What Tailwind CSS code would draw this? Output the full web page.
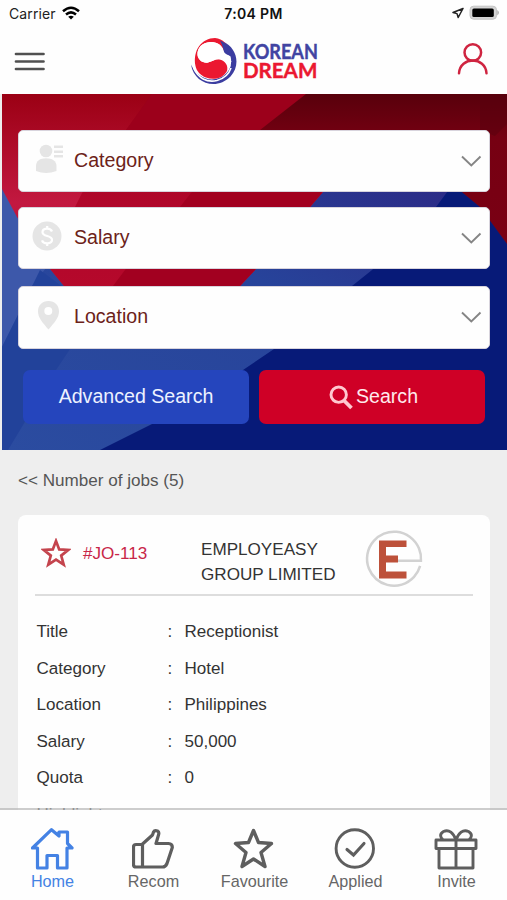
<!DOCTYPE html>
<html lang="en">
<head>
<meta charset="utf-8">
<title>Korean Dream</title>
<script src="https://cdn.jsdelivr.net/npm/@tailwindcss/browser@4"></script>
</head>
<body class="bg-[#eeeeee]">
<div class="relative flex h-[900px] w-[507px] flex-col overflow-hidden bg-[#eeeeee] font-['Liberation_Sans',Arial,sans-serif] text-[#333]">

  <!-- Status bar -->
  <div class="grid h-[28px] shrink-0 grid-cols-[169px_169px_1fr] items-center bg-[#fefefe] pr-[7px] font-[Inter,sans-serif] text-black">
    <div class="-mt-px flex items-center gap-[6px] pl-[9px]">
      <span class="text-[14px] tracking-[0.1px] text-[#222]">Carrier</span>
      <svg class="-mt-[2px] h-[14px] w-[18px]" viewBox="0 0 18 14" fill="none" stroke="#000" stroke-width="2.5"><path d="M1 5.3Q9 -1.8 17 5.3"/><path d="M4 8.5Q9 4.2 14 8.5"/><path d="M6.2 10.8Q9 8.6 11.8 10.8L9 13.6Z" fill="#000" stroke="none"/></svg>
    </div>
    <span class="-mt-[2px] text-center text-[14px] font-semibold tracking-[0.35px] whitespace-nowrap text-[#111]">7:04 PM</span>
    <div class="-mt-[2px] flex items-center justify-end gap-[5px]">
      <svg class="h-[12px] w-[12px]" viewBox="0 0 12 12" fill="none" stroke="#222" stroke-width="1.5" stroke-linejoin="round"><path d="M11 1.500L1 5.500L5 6.600L6.200 10.500Z"/></svg>
      <svg class="h-[16px] w-[31px]" viewBox="0 0 31 16"><rect x="1" y="1.200" width="26.500" height="13" rx="3.600" fill="#d4d4d4" stroke="#c4c4c4"/><rect x="3.300" y="3.400" width="21.500" height="8.600" rx="1.600" fill="#000"/><path d="M28.300 5Q31.500 7.700 28.300 10.400Z" fill="#aaa"/></svg>
    </div>
  </div>

  <!-- App header -->
  <header class="flex h-[66px] shrink-0 items-center bg-[#fefefe] pr-[19px] pl-[14px]">
    <svg class="h-[20px] w-[31px]" viewBox="0 0 31 20" stroke="#505050" stroke-width="2.7" stroke-linecap="round"><path d="M2 3H29.500M2 10.500H29.500M2 18H29.500"/></svg>
    <div class="ml-[145px] flex items-center">
      <svg class="h-[50px] w-[50px]" viewBox="190 35 50 50">
        <path d="M222.500 40.200C238 47 240.500 65 230.500 75.500C217 89.500 194 83 191 63.500C196 75 208 81.500 219 77C228 73.500 232 66 231 58C230 49 227.500 44.500 222.500 40.200Z" fill="#3b3da0"/>
        <path d="M193.500 67C198 77 207 82 217 79.500C224 77.500 229 73 231 67" fill="none" stroke="#fff" stroke-width="1.600"/>
        <path d="M195.500 65C192.500 49 202 37 215 37C223 37.500 228.500 44 228.800 52L224.500 51C222.500 44 217 40.500 210.500 41C202 41.500 197 47 197.500 54C198 59 203 62.500 208 61.500C213 60 215.500 57.500 220 58.500C225.500 60 228.500 65 227 70C223 77.500 214 79.500 206 76.500C200.500 74.500 196.500 70 195.500 65Z" fill="#eb1830"/>
        <path d="M220 39.500C228 42.500 233 50 233 57C230 54 225.500 54.500 224 51C223 46.500 222 43 220 39.500Z" fill="#3b3da0"/>
        <path d="M210 41C217 40.500 221.500 44 223.500 50.500C225 53.500 228 53.500 230 55.500L229.500 58L231.500 60.500L229.800 62.500L230.500 65L228.500 68C228 62 224.500 59 220 58.300C215.500 57.800 213 60 208 61.500C203 62.500 198 59 197.500 54C197 47 202 41.500 210 41Z" fill="#fff"/>
      </svg>
      <svg class="h-[50px] w-[80px] overflow-visible" viewBox="240 35 80 50" font-family="Lato" font-weight="700" font-size="20">
        <text x="242.900" y="58" textLength="75" lengthAdjust="spacingAndGlyphs" fill="#4144a2" stroke="#4144a2" stroke-width=".4">KOREAN</text>
        <text x="242.900" y="77" textLength="74.500" lengthAdjust="spacingAndGlyphs" fill="#eb1830" stroke="#eb1830" stroke-width=".4">DREAM</text>
      </svg>
    </div>
    <svg class="-mt-[7px] ml-auto h-[34px] w-[31px]" viewBox="0 0 31 34" fill="none" stroke="#cf2440" stroke-width="2.500" stroke-linecap="round"><circle cx="15.800" cy="11.500" r="8.300"/><path d="M2 32.300C3 15.300 28.500 15.300 29.500 32.300"/></svg>
  </header>

  <!-- Search panel -->
  <section class="relative ml-[2px] h-[356px] shrink-0 overflow-hidden pt-[36px] pr-[17px] pl-[16px]">
    <svg class="absolute inset-0 h-full w-full" viewBox="2 94 505 356" preserveAspectRatio="none">
      <defs>
        <linearGradient id="red" x1="0" y1="0" x2="0" y2="1"><stop offset="0" stop-color="#9b0014"/><stop offset=".45" stop-color="#c21840"/><stop offset="1" stop-color="#b80b2e"/></linearGradient>
        <linearGradient id="red2" x1="0" y1="0" x2="0" y2="1"><stop offset="0" stop-color="#96001a"/><stop offset=".45" stop-color="#b0062a"/><stop offset="1" stop-color="#b80a2c"/></linearGradient>
        <linearGradient id="dark" x1="0" y1="0" x2="0" y2="1"><stop offset="0" stop-color="#58000b"/><stop offset=".3" stop-color="#760012"/><stop offset="1" stop-color="#7a0014"/></linearGradient>
        <linearGradient id="band" x1="1" y1="0" x2="0" y2="1"><stop offset="0" stop-color="#2c2985"/><stop offset=".4" stop-color="#27439a"/><stop offset="1" stop-color="#2b4ca0"/></linearGradient>
      </defs>
      <rect x="2" y="94" width="505" height="356" fill="#071a78"/>
      <path d="M2 180V450H100L152 424L243 370L274 349L352 286L372 270L436 207L456 180Z" fill="url(#band)"/>
      <path d="M2 180L60 250L32 286L17 317L2 347Z" fill="#3d58aa"/>
      <path d="M40 270L80 300L100 330L70 349L56 370L8 450H2V347L17 317Z" fill="#22429a"/>
      <path d="M2 94H400L322 193L310 207L255 270L240 286L190 335H105L64 286L51 270L17 217L2 189Z" fill="url(#red)"/>
      <path d="M152 94H400L322 193L310 207L255 270L240 286L190 335H105L64 286L51 270L40 256L75 207L82 193L126 130Z" fill="url(#red2)"/>
      <path d="M152 94H306L260 130H126Z" fill="#9c001b"/>
      <path d="M260 130L322 193L310 207L255 270L240 286L190 335H76L113 286L125 270L180 207L191 193Z" fill="#a20020"/>
      <path d="M306 94H507V244L491 222L480 207L463 193L435 165H290L250 138L260 130Z" fill="url(#dark)"/>
      <path d="M507 124L495 136L480 130L480 94H507Z" fill="#58000d" opacity=".5"/>
    </svg>

    <div class="relative flex h-[62px] items-center rounded-[5px] border border-[#d8d4dd] bg-[#fefefe] pr-[7px] pl-[12px]">
      <svg class="mb-[4px] h-[36px] w-[36px]" viewBox="0 0 36 36" fill="#e5e5e5"><circle cx="15" cy="10" r="6.300"/><path d="M5 25C5 20 9 17.300 15 17.300S25.500 20 25.500 25V30Q15 34 5 30Z"/><path d="M23 4.500H32V7H23ZM23 9.500H32V12H23ZM23 14H32V16.500H23Z"/></svg>
      <span class="ml-[7px] flex-1 pb-[2px] text-[19.600px] leading-[24px] text-[#6c2219]">Category</span>
      <svg class="h-[14px] w-[22px]" viewBox="0 0 22 14" fill="none" stroke="#858585" stroke-width="1.900"><path d="M2 2.500L11.300 11.500L20.500 2.500"/></svg>
    </div>
    <div class="relative mt-[15px] flex h-[62px] items-center rounded-[5px] border border-[#d8d4dd] bg-[#fefefe] pr-[7px] pl-[12px]">
      <svg class="mb-[4px] h-[36px] w-[36px]" viewBox="0 0 36 36"><circle cx="16" cy="18" r="14.500" fill="#e5e5e5"/><path d="M21 13.500C19.500 9.500 11.500 9.800 11.500 14.200C11.500 19 21 17 21 21.800C21 26.300 12.500 26.500 11 22.300M16.200 8V11M16.200 25V28" fill="none" stroke="#fff" stroke-width="2.200"/></svg>
      <span class="ml-[7px] flex-1 pb-[2px] text-[19.600px] leading-[24px] text-[#6c2219]">Salary</span>
      <svg class="h-[14px] w-[22px]" viewBox="0 0 22 14" fill="none" stroke="#858585" stroke-width="1.900"><path d="M2 2.500L11.300 11.500L20.500 2.500"/></svg>
    </div>
    <div class="relative mt-[17px] flex h-[63px] items-center rounded-[5px] border border-[#d8d4dd] bg-[#fefefe] pr-[7px] pl-[12px]">
      <svg class="mb-[6px] h-[36px] w-[36px]" viewBox="0 0 36 36"><path d="M17.500 4C11 4 7 8.500 7 14.500C7 21 12 26 17.500 32.500C23 26 28 21 28 14.500C28 8.500 24 4 17.500 4Z" fill="#e5e5e5"/><circle cx="17.300" cy="14" r="4" fill="#fff"/></svg>
      <span class="ml-[7px] flex-1 pb-[4px] text-[19.600px] leading-[24px] text-[#6c2219]">Location</span>
      <svg class="mb-[2px] h-[14px] w-[22px]" viewBox="0 0 22 14" fill="none" stroke="#858585" stroke-width="1.900"><path d="M2 2.500L11.300 11.500L20.500 2.500"/></svg>
    </div>

    <div class="relative mt-[21px] mr-[5px] ml-[5px] grid h-[54px] grid-cols-2 gap-[10px] text-[19.600px] text-white">
      <div class="flex items-center justify-center rounded-[7px] bg-[#2545bd] text-[#edf2ff]">Advanced Search</div>
      <div class="flex items-center justify-center gap-[3px] rounded-[7px] bg-[#cf0026] pl-[3px] text-[#ffeaec]">
        <svg class="h-[25px] w-[24px]" viewBox="0 0 24 25" fill="none" stroke="#ffc8cf"><circle cx="9.700" cy="9.700" r="7.700" stroke-width="2.900"/><path d="M15 15.500L22.500 23" stroke-width="3.800"/></svg>
        <span>Search</span>
      </div>
    </div>
  </section>

  <p class="mt-[19px] ml-[18px] shrink-0 text-[17.100px] leading-[24px] text-[#555]">&lt;&lt; Number of jobs (5)</p>

  <!-- Job card -->
  <article class="mt-[22px] ml-[18px] h-[340px] w-[472px] shrink-0 rounded-[8px] bg-[#fefefe] px-[17px]">
    <div class="flex h-[81px] border-b-[2px] border-[#dddddd]">
      <svg class="mt-[23px] ml-[6px] h-[30px] w-[30px]" viewBox="0 0 30 30" fill="none" stroke="#c4444d" stroke-width="2.700"><path d="M15 3L18.200 11.400L27.300 11.900L20.200 17.600L22.700 26.600L15 21.500L7.300 26.600L9.800 17.600L2.700 11.900L11.800 11.400Z"/></svg>
      <span class="mt-[27px] ml-[12px] w-[118px] text-[17.100px] leading-[24px] text-[#c82648]">#JO-113</span>
      <span class="mt-[23px] w-[164px] text-[17.100px] leading-[24.500px]">EMPLOYEASY<br>GROUP LIMITED</span>
      <svg class="mt-[15px] h-[58px] w-[58px] overflow-visible" viewBox="0 0 58 58" fill="none"><path d="M30 30.800H55.960A27 27 0 1 0 55.100 35.800" stroke="#d2d2d2" stroke-width="2.500"/><path d="M14 10.500H41.500V17H21V25.500H33V32.500H21V41.500H41.500V48.500H14Z" fill="#bd513a"/></svg>
    </div>
    <dl class="mt-[18px] grid grid-cols-[131px_17px_1fr] pl-[1.500px] text-[17.050px] leading-[36.600px]">
      <dt>Title</dt><span>:</span><dd>Receptionist</dd>
      <dt>Category</dt><span>:</span><dd>Hotel</dd>
      <dt>Location</dt><span>:</span><dd>Philippines</dd>
      <dt>Salary</dt><span>:</span><dd>50,000</dd>
      <dt>Quota</dt><span>:</span><dd>0</dd>
      <dt>Highlight</dt>
    </dl>
  </article>

  <nav class="absolute inset-x-0 bottom-0 flex h-[92px] border-t-[2px] border-[#b8b8b8]/70 bg-[#fefefe] bg-clip-padding pt-[17px] pl-[2px] text-[16.200px] leading-[20px] text-[#666]">
    <div class="flex flex-1 flex-col items-center text-[#4482e4]">
      <svg class="h-[44px] w-[44px]" viewBox="1 0 44 44" fill="none" stroke="#4482e4" stroke-width="3.200" stroke-linejoin="round" stroke-linecap="round"><path d="M2.500 21L21.500 2.700L29 9V5H37.500V16.500L42 21H37V41H27.500V28.500H17V41H7.500V21Z"/></svg>
      <span>Home</span>
    </div>
    <div class="flex flex-1 flex-col items-center">
      <svg class="h-[44px] w-[44px]" viewBox="1 0 44 44" fill="none" stroke="#5e5e5e" stroke-width="3.200" stroke-linejoin="round"><path d="M5 17.500H11L21.500 8L22.500 5Q23.500 3 26.500 4Q28.500 5 27.500 8L25 16.500H37.500Q41.500 16.800 41.300 20.500L36 36.500Q34.500 40 31.500 40H5Q2.500 40 2.500 37.500V20Q2.500 17.500 5 17.500M11.500 17.500V39"/></svg>
      <span>Recom</span>
    </div>
    <div class="flex flex-1 flex-col items-center">
      <svg class="h-[44px] w-[44px]" viewBox="0.500 0 44 44" fill="none" stroke="#5e5e5e" stroke-width="3.400" stroke-linejoin="round"><path d="M21 3.500L26 15.500L39 16.500L28.500 25.500L32.500 39.500L21 32L9.500 39.500L13.500 25.500L3 16.500L16 15.500Z"/></svg>
      <span>Favourite</span>
    </div>
    <div class="flex flex-1 flex-col items-center">
      <svg class="h-[44px] w-[44px]" viewBox="0.500 0 44 44" fill="none" stroke="#5e5e5e" stroke-width="2.900" stroke-linecap="round"><circle cx="21.300" cy="21.500" r="18.700"/><path d="M13.500 22.500L20 28L30.500 16.500" stroke-width="3.100"/></svg>
      <span>Applied</span>
    </div>
    <div class="flex flex-1 flex-col items-center">
      <svg class="h-[44px] w-[44px] overflow-visible" viewBox="0.500 0 44 44" fill="none" stroke="#5e5e5e" stroke-width="2.900" stroke-linejoin="round"><rect x="1.500" y="13" width="40" height="8.500"/><path d="M4.500 21.500V41H38.500V21.500M21.500 12V41M21.500 13C19 6 14.500 2 9 4.500C4.500 7 6 11 8.500 12.500M21.500 13C24 6 28.500 2 34 4.500C38.500 7 37 11 34.500 12.500"/></svg>
      <span>Invite</span>
    </div>
  </nav>
</div>
</body>
</html>
